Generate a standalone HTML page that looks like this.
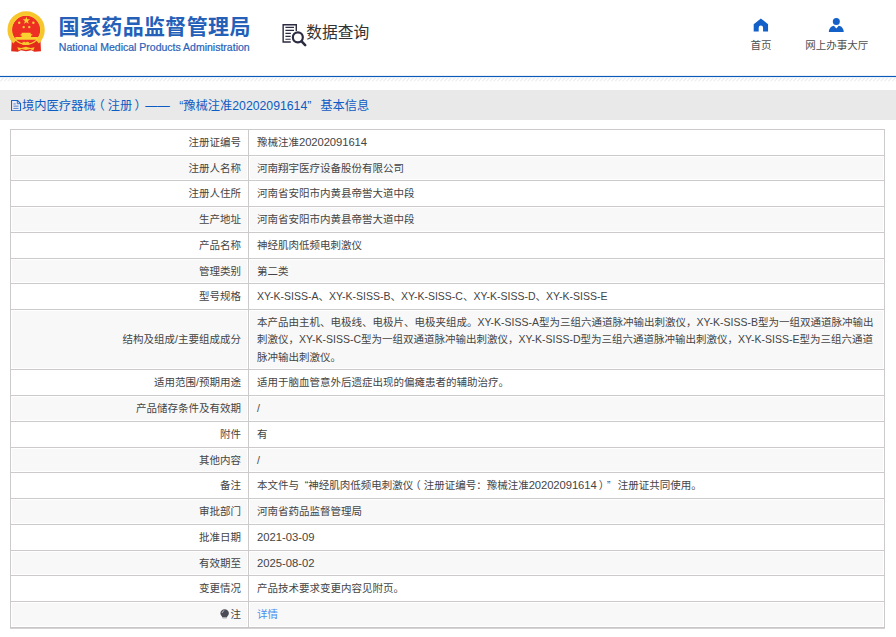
<!DOCTYPE html>
<html lang="zh-CN">
<head>
<meta charset="utf-8">
<title>国家药品监督管理局 数据查询</title>
<style>
html,body{margin:0;padding:0;background:#fff;}
body{width:896px;height:637px;overflow:hidden;position:relative;
  font-family:"Liberation Sans","Noto Sans CJK SC",sans-serif;color:#333;}
#pg{position:absolute;left:0;top:0;width:1024px;height:728px;zoom:0.875;
  font-size:12px;text-spacing-trim:space-all;}
.abs{position:absolute;}
#logo-cn{left:66.9px;top:14.9px;font-size:24px;line-height:32px;font-weight:bold;color:#2460b8;white-space:nowrap;letter-spacing:0.42px;}
#logo-en{left:67.2px;top:47.4px;font-size:12px;line-height:14px;color:#2a62b8;white-space:nowrap;-webkit-text-stroke:0.25px #2a62b8;}
#dq{left:350px;top:25.4px;font-size:18px;line-height:26px;color:#333;white-space:nowrap;}
.nav{font-size:12px;line-height:16px;color:#505050;white-space:nowrap;text-align:center;}
#blue{position:absolute;left:0;top:76px;width:896px;height:1px;background:#0a5ab9;box-shadow:0 0 0 0.5px rgba(10,90,185,0.18);}
#band{left:0;top:102.9px;width:1024px;height:33.7px;background:#e9e9e9;}
#title{left:25.1px;top:112.6px;font-size:14px;line-height:18px;color:#0d5cc4;white-space:nowrap;}
table{position:absolute;left:11.8px;top:147.3px;width:1000px;border-collapse:collapse;table-layout:fixed;
  font-size:12px;color:#444;}
tr{height:29.42px;}
td{border:1px solid #cccacb;padding:0.8px 6px 0 9.1px;line-height:20px;vertical-align:middle;white-space:nowrap;}
td.l{text-align:right;width:254.5px;padding:0.8px 8px 0 8px;}
tr.g td{background:#f8f8f8;box-shadow:inset 0 0 0 1.143px #fff;}
tr.big{height:69.1px;}
a{color:#4a8df0;text-decoration:none;}
.d{font-size:12.9px;line-height:1;letter-spacing:-0.1px;}
.dt{font-size:12.9px;line-height:1;letter-spacing:0;}
.q0{margin-left:1px;}.q1{margin-left:6.8px;}.q2{margin-right:6.3px;}.q3{margin-left:6.5px;}.q4{margin-right:8.2px;}
.pl{position:relative;left:-3.3px;}.pr{position:relative;left:2.5px;}
#tb1{position:absolute;left:10px;top:627px;width:875px;height:1px;background:#c8c6c7;}
#tb2{position:absolute;left:10px;top:628px;width:875px;height:1px;background:#d5d3d4;}
</style>
</head>
<body>
<div id="pg">
  <!-- emblem -->
  <svg class="abs" style="left:7.4px;top:10.2px" width="46" height="52" viewBox="0 0 46 52">
    <path d="M6.600 35.500 L5.900 48.400 L13.500 48.900 L17 47.200 L23 48.200 L29 47.200 L32.500 48.900 L40 48.400 L39.400 35.500 Z" fill="#e32b1c"/>
    <circle cx="23" cy="23.800" r="16.800" fill="#ee2f23"/>
    <path d="M35.870 37.500 A18.800 18.800 0 1 0 10.130 37.500" fill="none" stroke="#f7c52c" stroke-width="5"/>
    <circle cx="23" cy="23.800" r="16.700" fill="none" stroke="#f9cf33" stroke-width="1.300"/>
    <path d="M23.300 8.800l1.050 3.050h3.250l-2.600 1.950 0.950 3.150-2.650-1.900-2.650 1.900 0.950-3.150-2.600-1.950h3.250z" fill="#f9d232"/>
    <circle cx="15.100" cy="15.700" r="1.350" fill="#f9d232"/><circle cx="31.300" cy="15.700" r="1.350" fill="#f9d232"/>
    <circle cx="20.200" cy="20.700" r="1.350" fill="#f9d232"/><circle cx="26.600" cy="20.700" r="1.350" fill="#f9d232"/>
    <path d="M17.900 27h10.300v1.900h1.800v1.350h-1.400v1.850h7.800v3h-25.700v-3h7.100v-1.850h-1.200v-1.350h1.300z" fill="#f9d232"/>
    <ellipse cx="20.700" cy="39.300" rx="2.300" ry="1.900" fill="#f7c52c"/><ellipse cx="24.500" cy="39.300" rx="2.300" ry="1.900" fill="#f7c52c"/>
    <path d="M12.900 43.600 L17.300 44.600 L22.800 43 L28.300 44.600 L32.700 43.600 L31.200 47.300 L27.500 45.800 L22.800 46.900 L18.100 45.800 L14.400 47.300 Z" fill="#f7c52c"/>
  </svg>
  <div id="logo-cn" class="abs">国家药品监督管理局</div>
  <div id="logo-en" class="abs">National Medical Products Administration</div>

  <!-- data query icon -->
  <svg class="abs" style="left:320.3px;top:23.8px" width="32" height="32" viewBox="0 0 32 32">
    <path d="M18.600 11.300V4.200H3.600V24h8.700" fill="none" stroke="#2b2b42" stroke-width="1.600"/>
    <path d="M6.200 7.300h9.800M6.200 10.700h9.800M6.200 14.100h6.200M6.200 17.600h6M6.200 20.900h6" stroke="#2b2b42" stroke-width="1.300" fill="none"/>
    <circle cx="20.400" cy="18.700" r="5.700" fill="#fff" stroke="#2b2b42" stroke-width="2.500"/>
    <path d="M24.700 23.300l4.100 4.300" stroke="#2b2b42" stroke-width="2.900" stroke-linecap="round"/>
  </svg>
  <div id="dq" class="abs">数据查询</div>

  <!-- nav -->
  <svg class="abs" style="left:860.4px;top:20.5px" width="18" height="16" viewBox="0 0 18 16">
    <path d="M9 0.500L0.800 7.200V15.500H6.500V11.200a2.500 2.500 0 0 1 5 0V15.500H17.200V7.200Z" fill="#1260c8"/>
  </svg>
  <div class="abs nav" style="left:839.8px;width:60px;top:43.5px">首页</div>
  <svg class="abs" style="left:946.2px;top:18px" width="19" height="19" viewBox="0 0 19 19">
    <circle cx="9.500" cy="6.300" r="4" fill="#1260c8"/>
    <path d="M1 18.500C1 14 4 11.500 6.800 11.200L9.500 14.200 12.200 11.200C15 11.500 18 14 18 18.500Z" fill="#1260c8"/>
  </svg>
  <div class="abs nav" style="left:906.2px;width:100px;top:43.5px">网上办事大厅</div>

  <div id="band" class="abs"></div>
  <svg class="abs" style="left:12.6px;top:114px" width="12" height="13" viewBox="0 0 12 13">
    <path d="M0.600 0.600H7.500L10.900 4V12.400H0.600Z" fill="#ececf1" stroke="#1a62c4" stroke-width="1.200"/>
    <path d="M7.200 0.800V4.200H10.600" fill="none" stroke="#1a62c4" stroke-width="1"/>
    <path d="M2.800 4.500h2.600M2.800 7h5.800M2.800 9.600h5.800" stroke="#3a76cc" stroke-width="1" fill="none"/>
  </svg>
  <div id="title" class="abs">境内医疗器械<span class="pl">（</span>注册<span class="pr">）</span><span class="q0">——</span> <span class="q1">“</span>豫械注准20202091614<span class="q2">”</span> 基本信息</div>

  <table>
    <tr><td class="l">注册证编号</td><td>豫械注准<span class="d">20202091614</span></td></tr>
    <tr class="g"><td class="l">注册人名称</td><td>河南翔宇医疗设备股份有限公司</td></tr>
    <tr><td class="l">注册人住所</td><td>河南省安阳市内黄县帝喾大道中段</td></tr>
    <tr class="g"><td class="l">生产地址</td><td>河南省安阳市内黄县帝喾大道中段</td></tr>
    <tr><td class="l">产品名称</td><td>神经肌肉低频电刺激仪</td></tr>
    <tr class="g"><td class="l">管理类别</td><td>第二类</td></tr>
    <tr><td class="l">型号规格</td><td>XY-K-SISS-A、XY-K-SISS-B、XY-K-SISS-C、XY-K-SISS-D、XY-K-SISS-E</td></tr>
    <tr class="g big"><td class="l">结构及组成/主要组成成分</td><td>本产品由主机、电极线、电极片、电极夹组成。XY-K-SISS-A型为三组六通道脉冲输出刺激仪，XY-K-SISS-B型为一组双通道脉冲输出<br>刺激仪，XY-K-SISS-C型为一组双通道脉冲输出刺激仪，XY-K-SISS-D型为三组六通道脉冲输出刺激仪，XY-K-SISS-E型为三组六通道<br>脉冲输出刺激仪。</td></tr>
    <tr><td class="l">适用范围/预期用途</td><td>适用于脑血管意外后遗症出现的偏瘫患者的辅助治疗。</td></tr>
    <tr class="g"><td class="l">产品储存条件及有效期</td><td>/</td></tr>
    <tr><td class="l">附件</td><td>有</td></tr>
    <tr class="g"><td class="l">其他内容</td><td>/</td></tr>
    <tr><td class="l">备注</td><td>本文件与<span class="q3">“</span>神经肌肉低频电刺激仪<span class="pl">（</span>注册证编号：豫械注准<span class="d">20202091614</span><span class="pr">）</span><span class="q4">”</span>注册证共同使用。</td></tr>
    <tr class="g"><td class="l">审批部门</td><td>河南省药品监督管理局</td></tr>
    <tr><td class="l">批准日期</td><td><span class="dt">2021-03-09</span></td></tr>
    <tr class="g"><td class="l">有效期至</td><td><span class="dt">2025-08-02</span></td></tr>
    <tr><td class="l">变更情况</td><td>产品技术要求变更内容见附页。</td></tr>
    <tr class="g last"><td class="l"><svg width="10.600" height="12.400" viewBox="0 0 10 12" preserveAspectRatio="none" style="vertical-align:-1.500px;margin-right:0.900px"><path d="M5 0.200a4.600 4.600 0 0 1 4.600 4.600c0 2-1.700 2.900-2.100 4.600H2.500C2.100 7.700 0.400 6.800 0.400 4.800A4.600 4.600 0 0 1 5 0.200Z" fill="#4b4b55"/><path d="M2.700 9.600h4.600v1.200L6.100 11.800H3.900l-1.200-1z" fill="#cfcfd4"/><path d="M2.300 4a3 3 0 0 1 2-2.300" stroke="#c4c4cc" stroke-width="1" fill="none" stroke-linecap="round"/></svg>注</td><td><a>详情</a></td></tr>
  </table>
</div>
<div id="blue"></div>
<svg style="position:absolute;left:0;top:77px" width="896" height="5" viewBox="0 0 896 5">
  <defs><pattern id="ht" width="3.795" height="5" patternUnits="userSpaceOnUse"><path d="M0.500 4.100L3.200 1.100" stroke="#dcdcdc" stroke-width="0.900" stroke-linecap="round"/></pattern></defs>
  <rect width="896" height="5" fill="url(#ht)"/>
</svg>
<div id="tb1"></div><div id="tb2"></div>
</body>
</html>
